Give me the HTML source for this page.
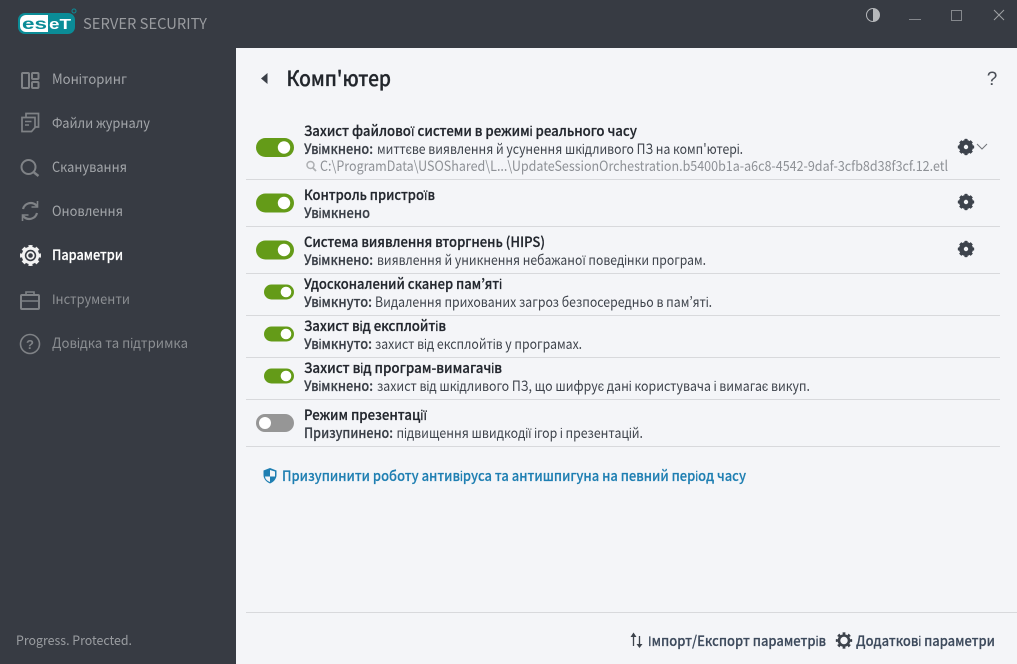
<!DOCTYPE html>
<html lang="uk"><head><meta charset="utf-8"><title>ESET Server Security</title>
<style>
html,body{margin:0;padding:0;width:1017px;height:664px;overflow:hidden;background:#373b43}
svg{display:block}
text{font-family:"Liberation Sans","Noto Sans CJK JP",sans-serif;font-size:13px;fill:#3a3f47}
.u{font-family:"Noto Sans CJK JP","Liberation Sans",sans-serif}
.n{fill:#a2a5a9;font-size:14px;font-family:"Noto Sans CJK JP","Liberation Sans",sans-serif}
.t{fill:#23272e;stroke:#23272e;stroke-width:.25px;font-family:"Noto Sans CJK JP","Liberation Sans",sans-serif;font-weight:500;font-size:14px}
.s{fill:#3a3f47;stroke:#3a3f47;stroke-width:.2px;font-family:"Noto Sans CJK JP","Liberation Sans",sans-serif;font-weight:500;font-size:14px}
.d{fill:#3f444c;font-family:"Noto Sans CJK JP","Liberation Sans",sans-serif;font-size:14px}
.f{fill:#3d4a5c;stroke:#3d4a5c;stroke-width:.2px;font-family:"Noto Sans CJK JP","Liberation Sans",sans-serif;font-weight:500;font-size:14px}
</style></head><body>
<svg width="1017" height="664" viewBox="0 0 1017 664" xmlns="http://www.w3.org/2000/svg">
<defs>
<g id="gear"><circle r="4.600" fill="none" stroke="#3d434c" stroke-width="4.800"/><circle r="6.700" fill="none" stroke="#3d434c" stroke-width="3" pathLength="80" stroke-dasharray="5.400 4.600" stroke-dashoffset="2.700"/></g>
<g id="on"><rect x="-19" y="-9.500" width="38" height="19" rx="9.500" fill="#649b18"/><circle cx="9" r="6.200" fill="#fff"/></g>
<g id="ons"><rect x="-15" y="-7.500" width="30" height="15" rx="7.500" fill="#649b18"/><circle cx="7" r="5.300" fill="#fff"/></g>
</defs>
<rect width="1017" height="664" fill="#373b43"/>
<rect x="236" y="48" width="781" height="616" fill="#f4f5f8"/>

<!-- logo -->
<rect x="18" y="13" width="57" height="21" rx="7" fill="#0b8c97"/>
<path d="M26 15H48V32H26a6 6 0 0 1-6-6V21a6 6 0 0 1 6-6z" fill="#fff"/>
<text x="22" y="29" textLength="25" lengthAdjust="spacingAndGlyphs" style="font-size:16px;font-weight:bold;fill:#0b8c97">es</text>
<text x="49" y="29" textLength="22" lengthAdjust="spacingAndGlyphs" style="font-size:15px;font-weight:bold;fill:#fff">eT</text>
<circle cx="74" cy="11" r="2" fill="none" stroke="#0b8c97"/>
<text class="u" x="83" y="29" textLength="124" lengthAdjust="spacingAndGlyphs" style="font-size:15px;fill:#999b9f">SERVER SECURITY</text>

<!-- window controls -->
<circle cx="873" cy="15" r="6.500" fill="none" stroke="#b5b7ba" stroke-width="1"/><path d="M873 8.500a6.500 6.500 0 0 1 0 13z" fill="#b5b7ba"/>
<path d="M909 19.500H921" stroke="#85888d" fill="none"/>
<rect x="951.500" y="10.500" width="10" height="10" fill="none" stroke="#85888d"/>
<path d="M994 10L1004 20M1004 10L994 20" stroke="#a0a2a6" fill="none"/>

<!-- sidebar icons -->
<g fill="none" stroke="#7f8286" stroke-width="2">
<rect x="22" y="73" width="7" height="15" rx="1"/><rect x="32" y="73" width="6.500" height="6" rx="1"/><rect x="32" y="82" width="6.500" height="6" rx="1"/>
<path d="M26 117v-3.500h12.500v13.500h-3M22 117.500h13v10l-3.500 4H22z" stroke-width="1.700"/><path d="M25 121.500h6.500M25 125h4" stroke-width="1.500"/>
<circle cx="28.500" cy="167" r="7"/><path d="M34 172.500l4.500 3.500" stroke-width="2.400"/>
<path d="M23 209a8 8 0 0 1 13-4l1 1M37 213a8 8 0 0 1-13 4l-1-1" stroke-width="2.200"/><path d="M37.500 201v6h-6M22.500 221v-6h6" stroke-width="1.600"/>
<rect x="21" y="295" width="18" height="14" rx="1"/><path d="M26 295v-3h8v3M21 301h18" stroke-width="1.600"/>
<circle cx="30" cy="344" r="9.500" stroke-width="1.600"/>
</g>
<text x="30" y="349" text-anchor="middle" style="font-size:13px;font-weight:bold;fill:#7f8286">?</text>
<g transform="translate(30.500 255.500)"><circle r="7.200" fill="none" stroke="#f2f2f2" stroke-width="3"/><circle r="9.200" fill="none" stroke="#f2f2f2" stroke-width="2.600" pathLength="80" stroke-dasharray="5.600 4.400" stroke-dashoffset="2.800"/><circle r="3.200" fill="none" stroke="#f2f2f2" stroke-width="1.800"/></g>

<!-- sidebar -->
<text class="n" x="52" y="84" textLength="75" lengthAdjust="spacingAndGlyphs">Моніторинг</text>
<text class="n" x="52" y="128" textLength="98" lengthAdjust="spacingAndGlyphs">Файли журналу</text>
<text class="n" x="52" y="172" textLength="75" lengthAdjust="spacingAndGlyphs">Сканування</text>
<text class="n" x="52" y="216" textLength="71" lengthAdjust="spacingAndGlyphs">Оновлення</text>
<text class="u" x="52" y="260" textLength="71" lengthAdjust="spacingAndGlyphs" style="font-size:14px;fill:#fff;font-weight:500;stroke:#fff;stroke-width:.2px">Параметри</text>
<text class="n" x="52" y="304" textLength="78" lengthAdjust="spacingAndGlyphs" style="fill:#8b8e92">Інструменти</text>
<text class="n" x="52" y="348" textLength="136" lengthAdjust="spacingAndGlyphs" style="fill:#8b8e92">Довідка та підтримка</text>
<text class="u" x="16" y="645" textLength="116" lengthAdjust="spacingAndGlyphs" style="fill:#9a9da1">Progress. Protected.</text>

<!-- header -->
<path d="M267.500 73v11l-6.500-5.500z" fill="#3a3f47"/>
<text class="u" x="286.500" y="86" textLength="104.500" lengthAdjust="spacingAndGlyphs" style="font-size:21px;font-weight:500;fill:#22262c;stroke:#22262c;stroke-width:.3px">Комп'ютер</text>
<text x="992" y="85" text-anchor="middle" style="font-size:19px;fill:#4a4f57">?</text>

<!-- separators -->
<g fill="#d8d9dc">
<rect x="246" y="179" width="754" height="1"/><rect x="246" y="226" width="754" height="1"/><rect x="246" y="273" width="754" height="1"/><rect x="246" y="315" width="754" height="1"/><rect x="246" y="357" width="754" height="1"/><rect x="246" y="399" width="754" height="1"/><rect x="246" y="446" width="754" height="1"/><rect x="246" y="612" width="771" height="1"/>
</g>

<!-- toggles -->
<use href="#on" x="275" y="147.500"/>
<use href="#on" x="275" y="203"/>
<use href="#on" x="275" y="250"/>
<use href="#ons" x="279" y="292"/>
<use href="#ons" x="279" y="334"/>
<use href="#ons" x="279" y="376"/>
<rect x="256" y="414" width="38" height="18" rx="9" fill="#969696"/><circle cx="265" cy="423" r="6" fill="#fff"/>

<!-- gears -->
<use href="#gear" x="966" y="147"/><use href="#gear" x="966" y="202"/><use href="#gear" x="966" y="249"/>
<path d="M977 144l5 5 5-5" fill="none" stroke="#70747a"/>

<!-- rows -->
<text class="t" x="304" y="136" textLength="333" lengthAdjust="spacingAndGlyphs">Захист файлової системи в режимі реального часу</text>
<text class="s" x="304" y="154" textLength="69" lengthAdjust="spacingAndGlyphs">Увімкнено:</text>
<text class="d" x="377" y="154" textLength="366" lengthAdjust="spacingAndGlyphs">миттєве виявлення й усунення шкідливого ПЗ на комп'ютері.</text>
<circle cx="310.500" cy="165" r="3.500" fill="none" stroke="#aeb0b3" stroke-width="1.500"/><path d="M313 168l3 3" stroke="#aeb0b3" stroke-width="1.800"/>
<text class="u" x="320" y="171" textLength="628" lengthAdjust="spacingAndGlyphs" style="fill:#8e9196;font-size:14px">C:\ProgramData\USOShared\L...\UpdateSessionOrchestration.b5400b1a-a6c8-4542-9daf-3cfb8d38f3cf.12.etl</text>

<text class="t" x="304" y="200" textLength="131" lengthAdjust="spacingAndGlyphs">Контроль пристроїв</text>
<text class="s" x="304" y="218" textLength="66" lengthAdjust="spacingAndGlyphs">Увімкнено</text>

<text class="t" x="304" y="247" textLength="241" lengthAdjust="spacingAndGlyphs">Система виявлення вторгнень (HIPS)</text>
<text class="s" x="304" y="265" textLength="69" lengthAdjust="spacingAndGlyphs">Увімкнено:</text>
<text class="d" x="377" y="265" textLength="329" lengthAdjust="spacingAndGlyphs">виявлення й уникнення небажаної поведінки програм.</text>

<text class="t" x="304" y="289" textLength="198" lengthAdjust="spacingAndGlyphs">Удосконалений сканер пам’яті</text>
<text class="s" x="304" y="307" textLength="68" lengthAdjust="spacingAndGlyphs">Увімкнуто:</text>
<text class="d" x="375" y="307" textLength="337" lengthAdjust="spacingAndGlyphs">Видалення прихованих загроз безпосередньо в пам’яті.</text>

<text class="t" x="304" y="331" textLength="142" lengthAdjust="spacingAndGlyphs">Захист від експлойтів</text>
<text class="s" x="304" y="349" textLength="68" lengthAdjust="spacingAndGlyphs">Увімкнуто:</text>
<text class="d" x="375" y="349" textLength="207" lengthAdjust="spacingAndGlyphs">захист від експлойтів у програмах.</text>

<text class="t" x="304" y="373" textLength="198" lengthAdjust="spacingAndGlyphs">Захист від програм-вимагачів</text>
<text class="s" x="304" y="391" textLength="69" lengthAdjust="spacingAndGlyphs">Увімкнено:</text>
<text class="d" x="377" y="391" textLength="433" lengthAdjust="spacingAndGlyphs">захист від шкідливого ПЗ, що шифрує дані користувача і вимагає викуп.</text>

<text class="t" x="304" y="420" textLength="123" lengthAdjust="spacingAndGlyphs">Режим презентації</text>
<text class="s" x="304" y="438" textLength="89" lengthAdjust="spacingAndGlyphs">Призупинено:</text>
<text class="d" x="396.500" y="438" textLength="246.500" lengthAdjust="spacingAndGlyphs">підвищення швидкодії ігор і презентацій.</text>

<!-- link -->
<path d="M270 468l6.500 2.500v4.500c0 4-3 7-6.500 8.500-3.500-1.500-6.500-4.500-6.500-8.500v-4.500z" fill="#1f7fb2"/>
<path d="M270 470v6.500h-5c.3 3 2.500 4.500 5 5.500v-5.500h5v-5l-5-1.500z" fill="#f4f5f8"/>
<text class="u" x="282" y="481" textLength="464" lengthAdjust="spacingAndGlyphs" style="font-size:14px;font-weight:500;fill:#1f7fb2;stroke:#1f7fb2;stroke-width:.2px">Призупинити роботу антивіруса та антишпигуна на певний період часу</text>

<!-- footer -->
<path d="M633.500 646v-11" stroke="#3d434c" stroke-width="1.300" fill="none"/><path d="M630.500 637l3-4.500 3 4.500z" fill="#3d434c"/>
<path d="M639.500 636v10" stroke="#3d434c" stroke-width="1.300" fill="none"/><path d="M636.500 644l3 4 3-4z" fill="#3d434c"/>
<text class="f" x="648" y="646" textLength="178" lengthAdjust="spacingAndGlyphs">Імпорт/Експорт параметрів</text>
<g transform="translate(844 640.500)"><circle r="5" fill="none" stroke="#3d434c" stroke-width="2.600"/><circle r="7" fill="none" stroke="#3d434c" stroke-width="2.400" pathLength="80" stroke-dasharray="5 5" stroke-dashoffset="2.500"/></g>
<text class="f" x="856" y="646" textLength="139" lengthAdjust="spacingAndGlyphs">Додаткові параметри</text>
</svg>
</body></html>
